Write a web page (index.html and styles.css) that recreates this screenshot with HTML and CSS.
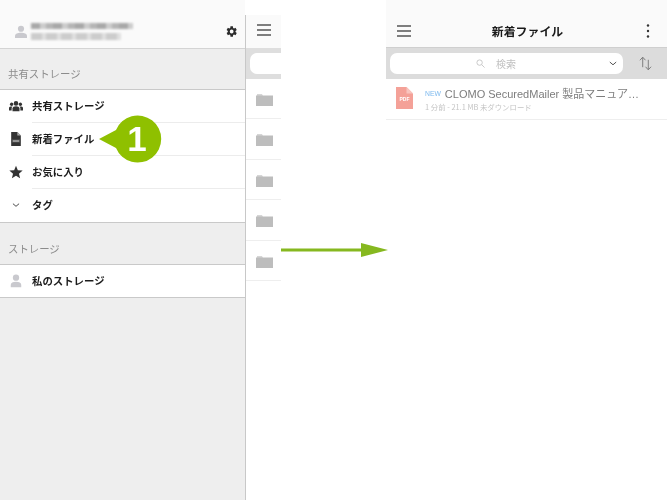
FILE: index.html
```html
<!DOCTYPE html>
<html lang="ja">
<head>
<meta charset="utf-8">
<title>新着ファイル</title>
<link rel="stylesheet" href="styles.css">
</head>
<body>
<div class="stage">
  <section class="phone-left">
    <aside class="sidebar">
      <header class="account">
        <svg class="account-icon" viewBox="0 0 14 16"><circle cx="7" cy="4.2" r="3.6"/><path d="M0 15v-2.5C0 10 3 8.8 7 8.8s7 1.200 7 3.700V15z"/></svg>
        <div class="account-text">
          <div class="blur-line long"></div>
          <div class="blur-line short"></div>
        </div>
        <svg class="gear" viewBox="0 0 24 24"><path d="M19.400 13a7.500 7.500 0 0 0 0-2l2.300-1.800-2.300-3.900-2.700 1.100a7.500 7.500 0 0 0-1.700-1L14.600 2.500h-4.500L9.700 5.400a7.500 7.500 0 0 0-1.700 1L5.300 5.300 3 9.200 5.300 11a7.500 7.500 0 0 0 0 2L3 14.800l2.300 3.900L8 17.600a7.500 7.500 0 0 0 1.700 1l.4 2.900h4.500l.4-2.900a7.500 7.500 0 0 0 1.700-1l2.700 1.100 2.300-3.900zM12.300 15.500a3.500 3.500 0 1 1 0-7 3.500 3.500 0 0 1 0 7z"/></svg>
      </header>
      <div class="section-label first">共有ストレージ</div>
      <ul class="menu">
        <li class="menu-item">
          <svg class="menu-icon" viewBox="0 0 16 13"><circle cx="8" cy="3.500" r="2.600"/><circle cx="3" cy="4.500" r="1.900"/><circle cx="13" cy="4.500" r="1.900"/><path d="M4 12.500V9.300C4 7.500 6 6.700 8 6.700s4 .8 4 2.600v3.200z"/><path d="M0 11.500V8.800C0 7.500 1.500 7 3 7c.5 0 .8 0 1 .2-.6.500-1 1.200-1 2.100v2.200zM16 11.500V8.800C16 7.500 14.500 7 13 7c-.5 0-.8 0-1 .2.600.500 1 1.200 1 2.100v2.200z"/></svg>
          <span class="menu-label">共有ストレージ</span>
        </li>
        <li class="menu-item">
          <svg class="menu-icon" viewBox="0 0 16 16"><path d="M2.500 0H9.500l4 4v12h-11z" fill="#333"/><path d="M9.500 0v4h4z" fill="#aaa"/><rect x="2.500" y="8.500" width="11" height="3.500" fill="#555"/><rect x="4.500" y="9.700" width="7" height="1.200" fill="#ccc"/></svg>
          <span class="menu-label">新着ファイル</span>
        </li>
        <li class="menu-item">
          <svg class="menu-icon star" viewBox="0 0 16 16"><path d="M8 .8l2.100 5.100 5.500.4-4.200 3.600 1.300 5.300L8 12.300l-4.700 2.900 1.300-5.300L.4 6.300l5.500-.4z"/></svg>
          <span class="menu-label">お気に入り</span>
        </li>
        <li class="menu-item">
          <svg class="menu-icon chevron" viewBox="0 0 16 16"><path d="M4.500 6.500L8 9.500l3.500-3"/></svg>
          <span class="menu-label">タグ</span>
        </li>
      </ul>
      <div class="section-label">ストレージ</div>
      <ul class="menu">
        <li class="menu-item last-row">
          <svg class="menu-icon person" viewBox="0 0 14 16"><circle cx="7" cy="4.200" r="3.600"/><path d="M1 15v-2.500C1 10 3.500 8.800 7 8.800s6 1.200 6 3.700V15z"/></svg>
          <span class="menu-label">私のストレージ</span>
        </li>
      </ul>
    </aside>
    <div class="peek">
      <div class="peek-head">
        <svg class="hamburger" viewBox="0 0 14 12"><path d="M0 1h14M0 6h14M0 11h14"/></svg>
      </div>
      <div class="peek-search"><div class="peek-field"></div></div>
      <div class="peek-row"><svg class="folder" viewBox="0 0 17 13"><path class="folder-tab" d="M1 3V1h5l1 2z"/><path d="M0 2.500h17V13H0z"/></svg></div>
      <div class="peek-row"><svg class="folder" viewBox="0 0 17 13"><path class="folder-tab" d="M1 3V1h5l1 2z"/><path d="M0 2.500h17V13H0z"/></svg></div>
      <div class="peek-row"><svg class="folder" viewBox="0 0 17 13"><path class="folder-tab" d="M1 3V1h5l1 2z"/><path d="M0 2.500h17V13H0z"/></svg></div>
      <div class="peek-row"><svg class="folder" viewBox="0 0 17 13"><path class="folder-tab" d="M1 3V1h5l1 2z"/><path d="M0 2.500h17V13H0z"/></svg></div>
      <div class="peek-row"><svg class="folder" viewBox="0 0 17 13"><path class="folder-tab" d="M1 3V1h5l1 2z"/><path d="M0 2.500h17V13H0z"/></svg></div>
    </div>
  </section>

  <section class="phone-right">
    <header class="top-bar">
      <svg class="hamburger" viewBox="0 0 14 12"><path d="M0 1h14M0 6h14M0 11h14"/></svg>
      <h1 class="title">新着ファイル</h1>
      <svg class="kebab" viewBox="0 0 4 14"><circle cx="2" cy="1.500" r="1.200"/><circle cx="2" cy="7" r="1.200"/><circle cx="2" cy="12.500" r="1.200"/></svg>
    </header>
    <div class="search-bar">
      <div class="search-field">
        <svg class="search-icon" viewBox="0 0 10 10"><circle cx="4" cy="4" r="3"/><path d="M6.200 6.200L9.500 9.500"/></svg>
        <span class="search-text">検索</span>
        <svg class="search-chevron" viewBox="0 0 8 5"><path d="M.8 1L4 3.800 7.200 1"/></svg>
      </div>
      <svg class="sort" viewBox="0 0 14 16"><path d="M4 12V1.500M1 4.500l3-3.300 3 3.300M10 4v10.500M7 11.500l3 3.300 3-3.300"/></svg>
    </div>
    <div class="file-row">
      <svg class="pdf" viewBox="0 0 17 22"><path d="M0 0h10.500L17 6.500V22H0z" fill="#f4a198"/><path d="M10.500 0L17 6.500h-6.500z" fill="#f8c5bf"/><text x="8.500" y="14" class="pdf-label">PDF</text></svg>
      <div class="file-info">
        <div class="file-name"><span class="new">NEW</span>CLOMO SecuredMailer 製品マニュア…</div>
        <div class="file-meta">1 分前 - 21.1 MB 未ダウンロード</div>
      </div>
    </div>
  </section>

  <div class="badge">
    <svg class="badge-shape" viewBox="0 0 64 48"><path d="M0 24L17 15A23.500 23.500 0 1 1 17 33z"/></svg>
    <span class="badge-num">1</span>
  </div>
  <svg class="arrow" viewBox="0 0 107 16"><path d="M0 6.500h80V1L107 8 80 15V9.500H0z"/></svg>
</div>
</body>
</html>
```
FILE: styles.css
```css
* { box-sizing: border-box; }
html, body { margin: 0; padding: 0; background: #fff; }
body { font-family: "Noto Sans CJK JP", "Noto Sans", sans-serif; color: #222; }
ul { list-style: none; margin: 0; padding: 0; }

.stage { position: relative; width: 667px; height: 500px; overflow: hidden; display: flex; filter: blur(0.3px); }

.phone-left { width: 281px; height: 500px; display: flex; flex: none; }
.sidebar { width: 245px; flex: none; background: #eeeeee; display: flex; flex-direction: column; }

.account { height: 49px; padding: 15px 8px 0 15px; display: flex; align-items: center; background: #fafafa; border-bottom: 1px solid #d4d4d4; }
.account-icon { width: 12px; height: 14px; fill: #c9c9ce; flex: none; }
.account-text { margin-left: 4px; flex: 1; display: flex; flex-direction: column; gap: 4px; filter: blur(1.200px); }
.blur-line { height: 6px; background: repeating-linear-gradient(90deg, #a8a8a8 0 9px, #cccccc 9px 15px, #b5b5b5 15px 22px); }
.blur-line.long { width: 102px; }
.blur-line.short { width: 90px; height: 7px; background: repeating-linear-gradient(90deg, #cccccc 0 11px, #e0e0e0 11px 15px); }
.gear { width: 13px; height: 13px; fill: #2b2b2b; flex: none; margin-right: -1px; }

.section-label { height: 41px; padding: 0 8px 8px; display: flex; align-items: flex-end; font-size: 10.400px; line-height: 15px; color: #8c8c8c; }
.section-label.first { height: 40px; }

.menu { background: #fff; border-top: 1px solid #c9c9c9; border-bottom: 1px solid #c9c9c9; }
.menu-item { height: 33px; display: flex; align-items: center; position: relative; padding: 0 0 2px 9px; }
.menu-item.last-row { height: 32px; padding-bottom: 1px; }
.menu-item + .menu-item::before { content: ""; position: absolute; left: 32px; right: 0; top: -1px; height: 1px; background: #ececec; }
.menu-icon { width: 14px; height: 14px; flex: none; fill: #333; }
.menu-icon.chevron { fill: none; stroke: #444; stroke-width: 1.100; }
.menu-icon.person { fill: #c9c9ce; }
.menu-label { margin-left: 9px; font-size: 10.400px; font-weight: 700; color: #1c1c1c; line-height: 15px; }

.peek { flex: 1; border-left: 1px solid #c8c8c8; margin-top: 15px; background: #fff; }
.peek-head { height: 33px; background: #fafafa; padding: 9px 0 0 11px; }
.hamburger { width: 14px; height: 12px; fill: none; stroke: #555; stroke-width: 1.500; display: block; }
.peek-search { height: 31px; background: #dedede; padding: 5px 0 5px 4px; }
.peek-field { height: 21px; background: #fff; border-radius: 7px 0 0 7px; }
.peek-row { height: 40.400px; border-bottom: 1px solid #eeeeee; padding: 14px 0 0 10px; }
.folder { width: 17px; height: 13px; display: block; fill: #bdbdbd; }
.folder-tab { fill: #d6d6d6; }

.phone-right { margin-left: 105px; width: 281px; height: 500px; flex: none; background: #fff; }
.top-bar { height: 47px; background: #fafafa; padding: 15px 17px 0 11px; display: flex; align-items: center; justify-content: space-between; }
.title { margin: 0 0 0 -2px; font-size: 11.900px; font-weight: 700; color: #1a1a1a; line-height: 16px; }
.kebab { width: 4px; height: 14px; fill: #333; }
.search-bar { height: 32px; background: #dcdcdc; border-top: 1px solid #cfcfcf; padding: 5px 15px 5px 4px; display: flex; align-items: center; justify-content: space-between; }
.search-field { width: 233px; height: 21px; background: #fff; border-radius: 7px; display: flex; align-items: center; padding-left: 86px; position: relative; }
.search-icon { width: 9px; height: 9px; fill: none; stroke: #c4c4c4; stroke-width: 1; }
.search-text { margin-left: 11px; font-size: 10px; color: #c0c0c0; }
.search-chevron { position: absolute; right: 6px; top: 8px; width: 8px; height: 5px; fill: none; stroke: #555; stroke-width: 1; }
.sort { width: 13px; height: 15px; fill: none; stroke: #777; stroke-width: 1; }
.file-row { height: 41px; border-bottom: 1px solid #eeeeee; padding: 8px 0 0 10px; display: flex; align-items: flex-start; }
.pdf { width: 17px; height: 22px; flex: none; }
.pdf-label { font-family: "Liberation Sans", sans-serif; font-size: 5px; font-weight: 700; fill: #fff; text-anchor: middle; }
.file-info { margin-left: 12px; }
.file-name { font-family: "Liberation Sans", "Noto Sans CJK JP", sans-serif; font-size: 11px; line-height: 13px; color: #7d7d7d; white-space: nowrap; }
.new { font-size: 6.800px; font-weight: 400; color: #7db9ee; margin-right: 4px; vertical-align: 2px; }
.file-meta { font-size: 7.400px; line-height: 10px; color: #c4c4c4; margin-top: 1px; white-space: nowrap; }

.badge { position: absolute; left: 99px; top: 115px; width: 64px; height: 48px; }
.badge-shape { display: block; width: 64px; height: 48px; fill: #8fc000; }
.badge-num { position: absolute; left: 27px; top: 0; width: 22px; text-align: center; font-family: "Liberation Sans", sans-serif; font-size: 35px; font-weight: 700; line-height: 48px; color: #fff; }

.arrow { position: absolute; left: 281px; top: 242px; width: 107px; height: 16px; fill: #86b81f; }
```
